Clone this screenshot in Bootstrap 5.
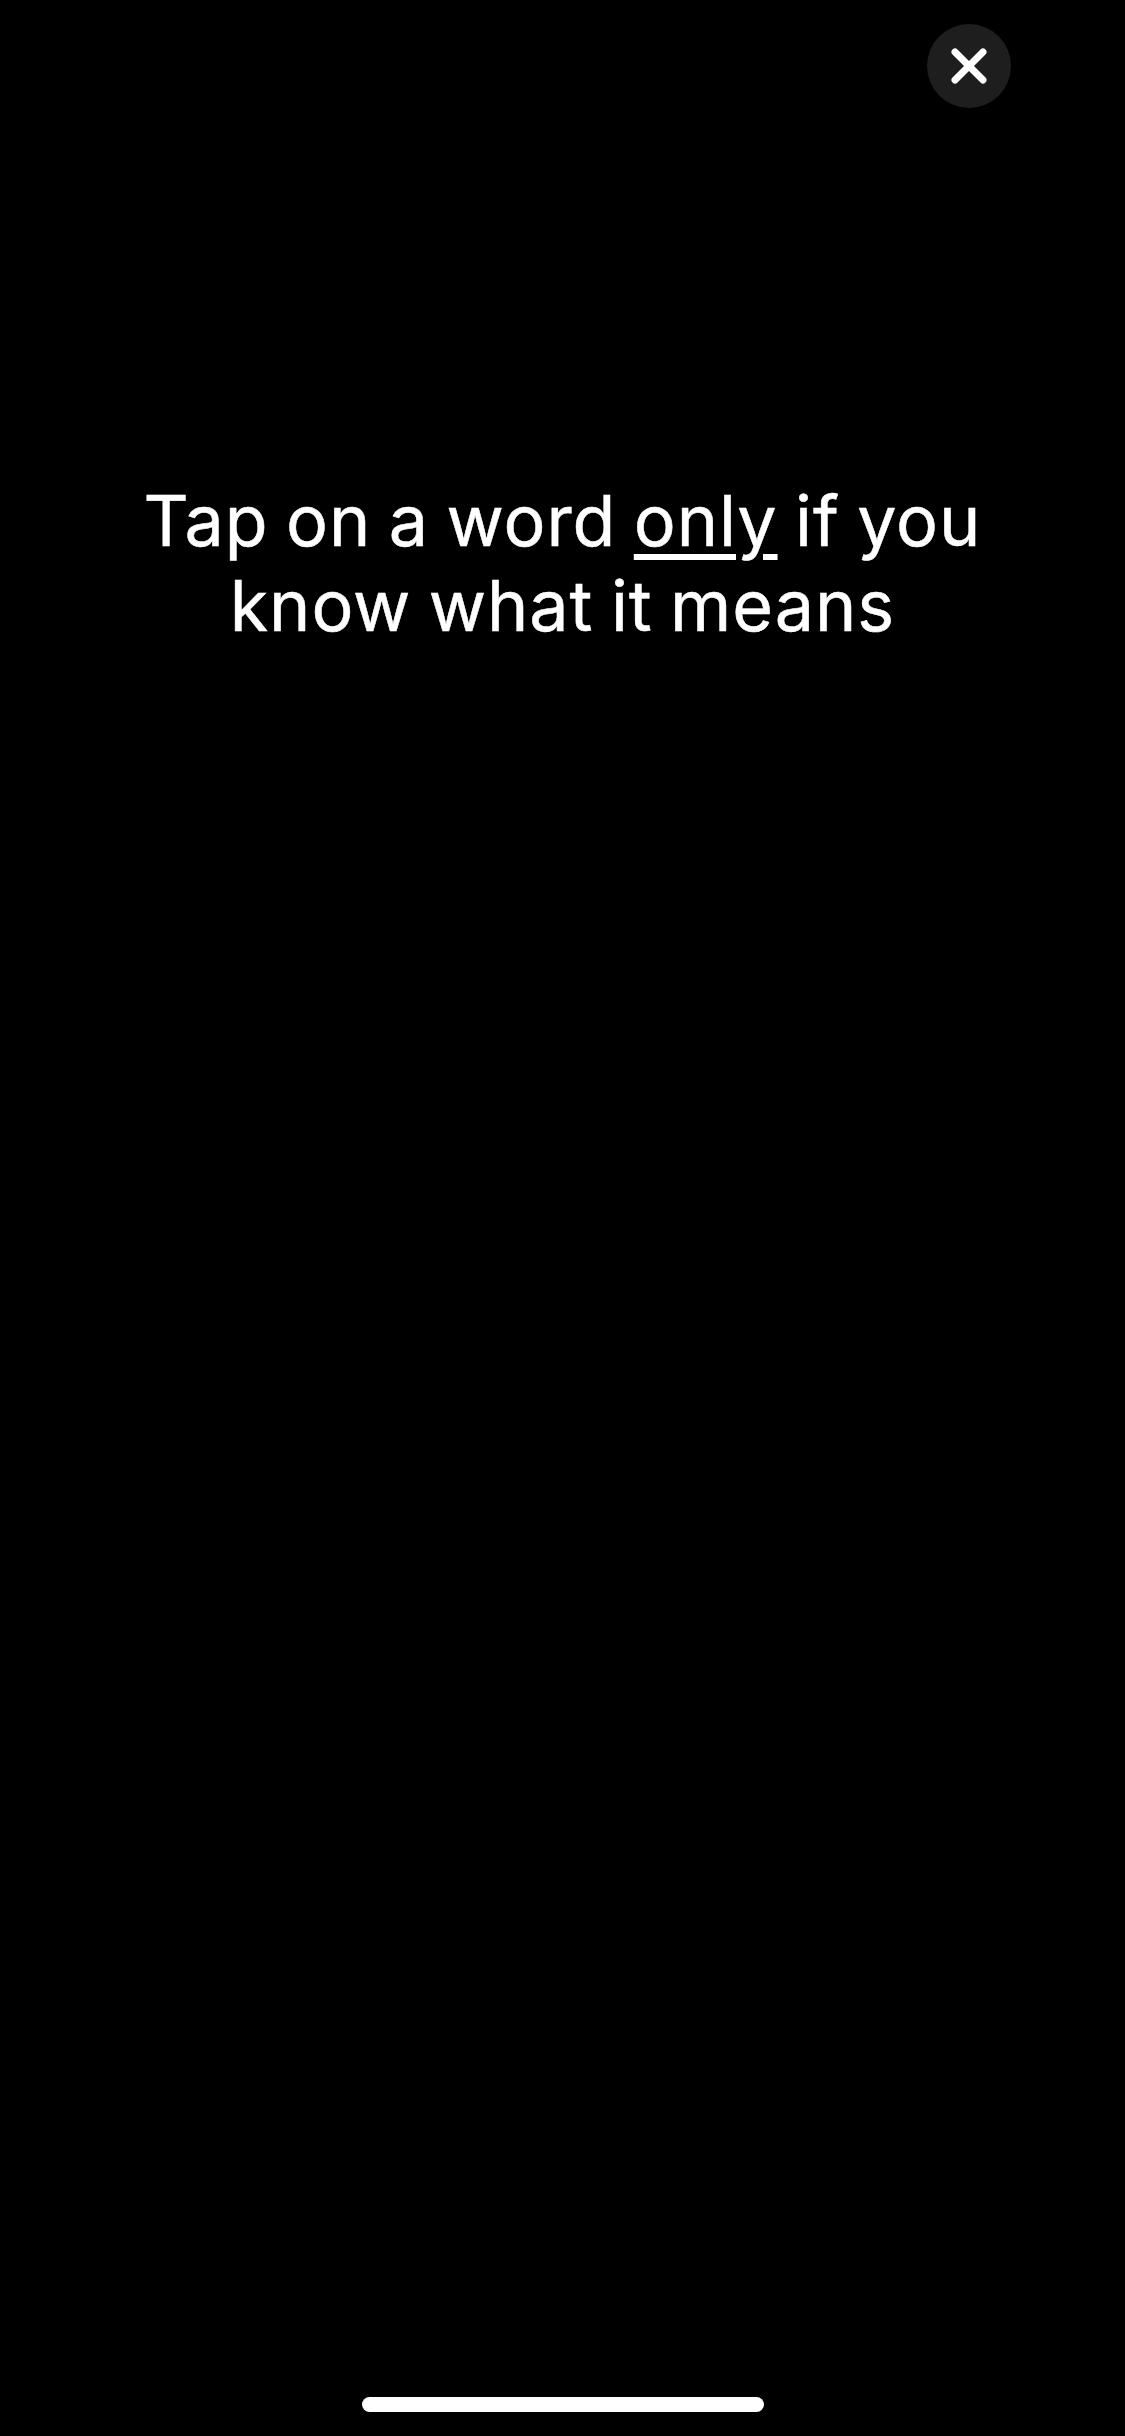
<!DOCTYPE html>
<html lang="en">
<head>
<meta charset="utf-8">
<title>Tap on a word</title>
<link href="https://cdn.jsdelivr.net/npm/bootstrap@5.3.0/dist/css/bootstrap.min.css" rel="stylesheet">
<style>
html, body { background: #000; margin: 0; }
.screen-wrap { height: 2436px; width: 1125px; background: #000; overflow: hidden; }
.top-bar { padding: 24px 114px 0 0; }
.close-round { width: 84px; height: 84px; background: #1e1e1e; border: 0; }
.close-round svg { width: 42px; height: 42px; display: block; }
.prompt-text {
  font-family: Inter, "Liberation Sans", sans-serif;
  font-size: 70px; line-height: 85px; font-weight: 400;
  letter-spacing: .95px; word-spacing: -3.2px; color: #fff; text-align: center;
  -webkit-text-stroke: .5px #fff;
  margin: 370px 0 0 0;
}
.prompt-text u { text-decoration-thickness: 6px; text-underline-offset: 8px; }
.home-pill { width: 402px; height: 15px; background: #fff; border-radius: 8px; margin-bottom: 24px; }
</style>
</head>
<body>
<div class="screen-wrap d-flex flex-column">
  <div class="top-bar d-flex justify-content-end">
    <button type="button" class="close-round rounded-circle d-flex align-items-center justify-content-center p-0" aria-label="Close">
      <svg viewBox="0 0 42 42" fill="none" stroke="#fff" stroke-width="7" stroke-linecap="round"><path d="M7 7L35 35M35 7L7 35"/></svg>
    </button>
  </div>
  <h1 class="prompt-text">Tap on a word <u>only</u> if you<br>know what it means</h1>
  <div class="mt-auto d-flex justify-content-center">
    <div class="home-pill"></div>
  </div>
</div>
<script src="https://cdn.jsdelivr.net/npm/bootstrap@5.3.0/dist/js/bootstrap.bundle.min.js"></script>
</body>
</html>
